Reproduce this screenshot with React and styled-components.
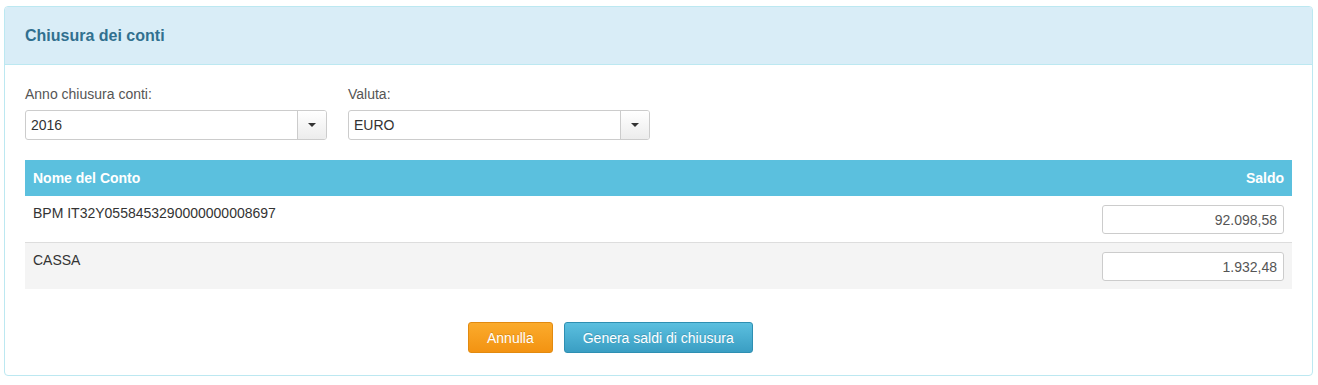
import React from "react";
import styled, { createGlobalStyle } from "styled-components";

const Global = createGlobalStyle`
  html, body { margin: 0; padding: 0; background: #fff; }
  body { font-family: "Liberation Sans", Arial, sans-serif; font-size: 14px; color: #333; }
  * { box-sizing: border-box; }
`;

const Page = styled.div`
  padding: 6px 5px 0 4px;
`;

const Panel = styled.section`
  border: 1px solid #bce8f1;
  border-radius: 4px;
  background: #fff;
  height: 370px;
  overflow: hidden;
`;

const PanelHeading = styled.header`
  background: #d9edf7;
  border-bottom: 1px solid #bce8f1;
  height: 58px;
  padding: 0 20px;
  display: flex;
  align-items: center;
`;

const Title = styled.h3`
  margin: 0;
  font-size: 16px;
  font-weight: bold;
  color: #31708f;
`;

const PanelBody = styled.div`
  padding: 20px 20px 20px;
`;

const FilterRow = styled.div`
  display: flex;
  gap: 21px;
`;

const Field = styled.div`
  display: flex;
  flex-direction: column;
  width: ${(p) => p.$width}px;
`;

const Label = styled.label`
  font-size: 14px;
  color: #555;
  line-height: 18px;
  margin-bottom: 7px;
`;

const SelectBox = styled.div`
  display: flex;
  height: 30px;
  border: 1px solid #ccc;
  border-radius: 3px;
  background: #fff;
  overflow: hidden;
`;

const SelectValue = styled.div`
  flex: 1;
  padding: 0 5px;
  display: flex;
  align-items: center;
  font-size: 14px;
  color: #333;
`;

const SelectButton = styled.div`
  width: 29px;
  border-left: 1px solid #ccc;
  background: linear-gradient(#ffffff, #ececec);
  display: flex;
  align-items: center;
  justify-content: center;
`;

const Caret = styled.span`
  width: 0;
  height: 0;
  border-left: 4px solid transparent;
  border-right: 4px solid transparent;
  border-top: 4px solid #333;
`;

const Table = styled.div`
  margin-top: 20px;
  display: flex;
  flex-direction: column;
`;

const HeadRow = styled.div`
  display: flex;
  justify-content: space-between;
  align-items: center;
  height: 36px;
  padding: 0 8px;
  background: #5bc0de;
  color: #fff;
  font-weight: bold;
  font-size: 14px;
`;

const Row = styled.div`
  display: flex;
  justify-content: space-between;
  align-items: flex-start;
  height: ${(p) => (p.$striped ? 47 : 46)}px;
  padding: 8px 8px 0;
  background: ${(p) => (p.$striped ? "#f4f4f4" : "#fff")};
  border-top: ${(p) => (p.$striped ? "1px solid #ddd" : "none")};
`;

const AccountName = styled.div`
  font-size: 14px;
  color: #333;
  line-height: 18px;
`;

const AmountInput = styled.input`
  width: 182px;
  height: 29px;
  margin-top: 1px;
  border: 1px solid #ccc;
  border-radius: 3px;
  background: #fff;
  text-align: right;
  padding: 0 6px;
  font-family: "Liberation Sans", Arial, sans-serif;
  font-size: 14px;
  color: #555;
`;

const Actions = styled.div`
  display: flex;
  gap: 11px;
  margin-top: 33px;
  padding-left: 443px;
`;

const Button = styled.button`
  height: 31px;
  padding: 0 18px;
  border-radius: 3px;
  font-family: "Liberation Sans", Arial, sans-serif;
  font-size: 14px;
  color: #fff;
  text-shadow: 0 -1px 0 rgba(0, 0, 0, 0.15);
  cursor: pointer;
  border: 1px solid ${(p) => (p.$variant === "warn" ? "#e28a10" : "#2e8fb2")};
  background: ${(p) =>
    p.$variant === "warn"
      ? "linear-gradient(#fbab2c, #f39312)"
      : "linear-gradient(#5bbfdf, #3a9ec3)"};
`;

const accounts = [
  { name: "BPM IT32Y0558453290000000008697", amount: "92.098,58" },
  { name: "CASSA", amount: "1.932,48" },
];

export default function App() {
  return (
    <Page>
      <Global />
      <Panel>
        <PanelHeading>
          <Title>Chiusura dei conti</Title>
        </PanelHeading>
        <PanelBody>
          <FilterRow>
            <Field $width={302}>
              <Label>Anno chiusura conti:</Label>
              <SelectBox>
                <SelectValue>2016</SelectValue>
                <SelectButton><Caret /></SelectButton>
              </SelectBox>
            </Field>
            <Field $width={302}>
              <Label>Valuta:</Label>
              <SelectBox>
                <SelectValue>EURO</SelectValue>
                <SelectButton><Caret /></SelectButton>
              </SelectBox>
            </Field>
          </FilterRow>
          <Table>
            <HeadRow>
              <span>Nome del Conto</span>
              <span>Saldo</span>
            </HeadRow>
            {accounts.map((a, i) => (
              <Row key={a.name} $striped={i % 2 === 1}>
                <AccountName>{a.name}</AccountName>
                <AmountInput defaultValue={a.amount} />
              </Row>
            ))}
          </Table>
          <Actions>
            <Button $variant="warn">Annulla</Button>
            <Button $variant="info">Genera saldi di chiusura</Button>
          </Actions>
        </PanelBody>
      </Panel>
    </Page>
  );
}
